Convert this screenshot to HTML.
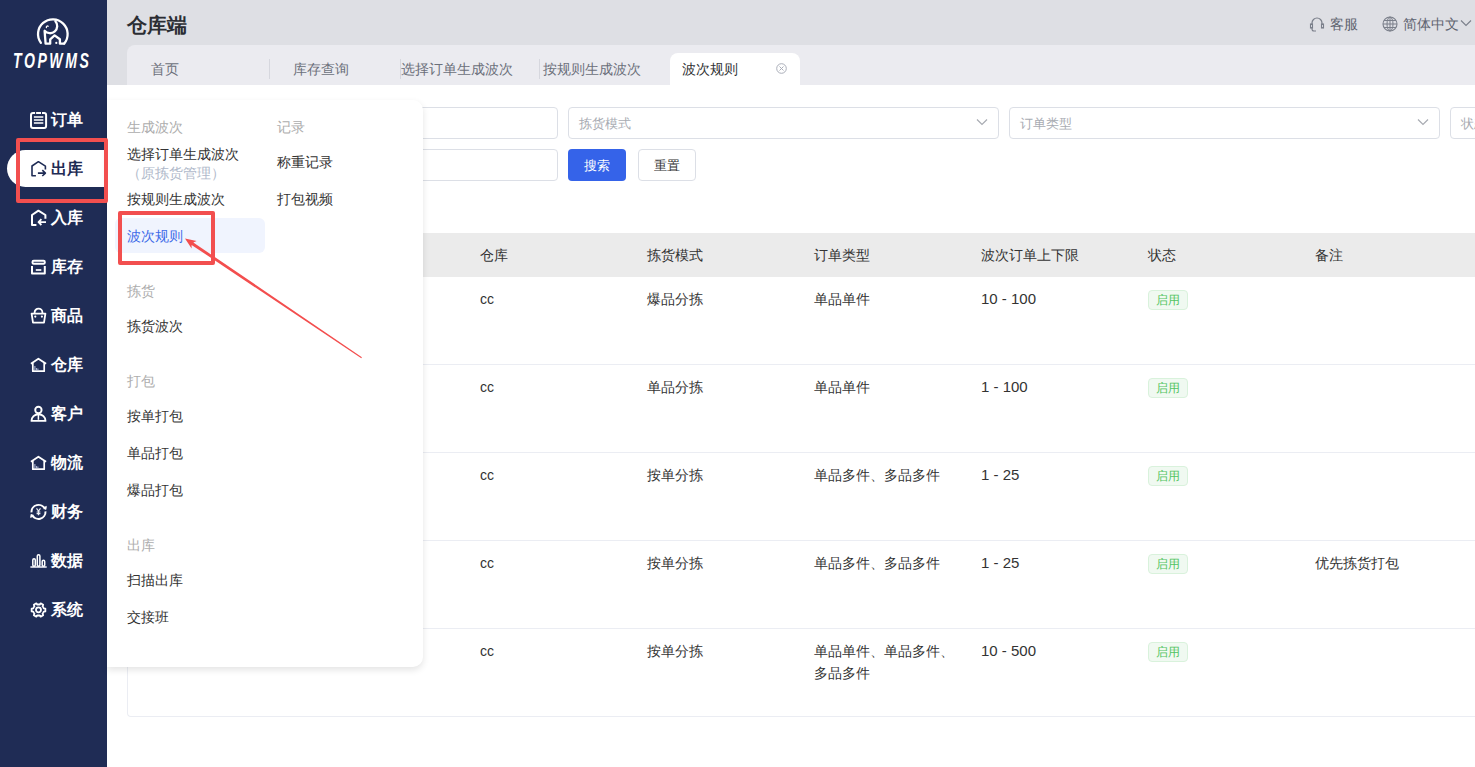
<!DOCTYPE html>
<html><head><meta charset="utf-8">
<style>
*{box-sizing:border-box;margin:0;padding:0}
html,body{width:1475px;height:767px;overflow:hidden;background:#fff;font-family:"Liberation Sans",sans-serif;color:#333}
.a{position:absolute;white-space:nowrap}
#side{position:absolute;left:0;top:0;width:107px;height:767px;background:#1f2c55}
#hdr{position:absolute;left:107px;top:0;width:1368px;height:85px;background:#dedfe4}
#tabs{position:absolute;left:127px;top:45px;width:1348px;height:40px;background:#ebebf0;border-top-left-radius:8px}
.tab{position:absolute;top:4px;height:40px;line-height:40px;font-size:14px;color:#6b707b}
.dv{position:absolute;top:14px;width:1px;height:20px;background:#d6d7de}
.nav{position:absolute;left:0;width:107px;height:24px}
.nav svg{position:absolute;left:30px;top:4px}
.nav span{position:absolute;left:51px;top:0;line-height:24px;font-size:16px;font-weight:900;color:#fff}
.inp{position:absolute;height:32px;border:1px solid #dcdfe6;border-radius:4px;background:#fff}
.ph{position:absolute;left:10px;top:1px;line-height:30px;font-size:13px;color:#a8abb2}
.chev{position:absolute;right:10px;top:10px}
.th{position:absolute;top:233px;line-height:44px;font-size:14px;color:#333}
.td{position:absolute;font-size:14px;color:#333;line-height:22px}
.tag{position:absolute;width:40px;height:20px;border:1px solid #d9f2dc;background:#f0f9f1;border-radius:4px;color:#52c461;font-size:12px;line-height:19px;text-align:center}
.rowl{position:absolute;left:127px;width:1348px;height:1px;background:#ebedf3}
#pop{position:absolute;left:107px;top:100px;width:316px;height:567px;background:#fff;border-radius:0 10px 10px 0;box-shadow:0 3px 7px rgba(0,0,0,0.11)}
.pg{position:absolute;font-size:14px;color:#adadad;line-height:20px}
.pi{position:absolute;font-size:14px;color:#333;line-height:20px}
</style></head><body>
<div id="side">
  <!-- logo -->
  <svg class="a" style="left:0;top:0" width="107" height="80" viewBox="0 0 107 80">
    <g fill="none" stroke="#fff" stroke-width="2.3" stroke-linecap="round" stroke-linejoin="round">
    <path d="M40.9 42.9 A14.8 14.8 0 1 1 64.2 43.6"/>
    <path d="M55.4 21.2 A6.3 6.3 0 1 1 44.6 30.8 L45.6 43.7 L50.2 43.7 L50.2 39.3 L54.6 35.4 L59.9 39.3 L59.9 43.7 L64.2 43.7"/>
    <path d="M46.4 27.6 A1.2 1.2 0 0 1 48.2 26.2" stroke-width="1.3"/>
    </g>
    <circle cx="56.3" cy="42.9" r="1.1" fill="#fff"/>
  </svg>
  <div class="a" style="left:13px;top:48px;font-size:22px;font-weight:bold;font-style:italic;color:#fff;transform:scaleX(0.64);transform-origin:left top;letter-spacing:4px">TOPWMS</div>

  <div class="a" style="left:7px;top:150px;width:100px;height:37px;background:#fff;border-radius:19px 0 0 19px"></div>

  <div class="nav" style="top:108px"><span>订单</span></div>
  <div class="nav" style="top:157px"><span style="color:#1f2c55">出库</span></div>
  <div class="nav" style="top:206px"><span>入库</span></div>
  <div class="nav" style="top:255px"><span>库存</span></div>
  <div class="nav" style="top:304px"><span>商品</span></div>
  <div class="nav" style="top:353px"><span>仓库</span></div>
  <div class="nav" style="top:402px"><span>客户</span></div>
  <div class="nav" style="top:451px"><span>物流</span></div>
  <div class="nav" style="top:500px"><span>财务</span></div>
  <div class="nav" style="top:549px"><span>数据</span></div>
  <div class="nav" style="top:598px"><span>系统</span></div>
<svg class="a" style="left:0;top:0" width="107" height="767" viewBox="0 0 107 767">
 <g fill="none" stroke="#fff" stroke-width="2" stroke-linecap="butt" stroke-linejoin="round">
  <!-- 订单 -->
  <path d="M35.1 113 H33 a2 2 0 0 0 -2 2 V125.9 a2 2 0 0 0 2 2 H44.1 a2 2 0 0 0 2-2 V115 a2 2 0 0 0-2-2 H42"/>
  <path d="M36.1 113 H41"/>
  <path d="M33.9 117H43.3M33.9 120H43.3M33.9 123H43.3" stroke-width="1.7"/>
  <!-- 入库 -->
  <path d="M36.4 225 H32 V215 L38.4 210.7 L45.4 215 V218.8"/>
  <path d="M46 222.1 H38.5 M41.4 219.2 L38.5 222.1 L41.4 225" stroke-width="1.8"/>
  <!-- 库存 -->
  <rect x="32.5" y="260.7" width="12.3" height="3" rx="1.2"/>
  <path d="M32 266 V273.6 H44.8 V266"/>
  <path d="M35.8 270 H41.3" stroke-width="1.7"/>
  <!-- 商品 -->
  <path d="M34.6 313 V312.5 a3.9 3.9 0 0 1 7.8 0 V313" stroke-width="1.8"/>
  <path d="M31.6 313.6 H45.4 L44 322.6 H33 Z" stroke-width="1.8"/>
  <!-- 仓库 -->
  <path d="M30.9 363.8 L38.4 358.7 L46.1 363.8" stroke-width="1.8"/>
  <path d="M32.8 363 V371.2 H44.2 V363" stroke-width="1.7"/>
  <!-- 客户 -->
  <circle cx="38.4" cy="410" r="3.2" stroke-width="1.9"/>
  <path d="M31.5 420.9 A6.9 6.6 0 0 1 45.5 420.9 Z" stroke-width="1.9"/>
  <!-- 物流 -->
  <path d="M30.9 461.8 L38.4 456.7 L46.1 461.8" stroke-width="1.8"/>
  <path d="M32.8 461 V469.2 H44.2 V461" stroke-width="1.7"/>
  <!-- 财务 -->
  <path d="M31.52 512.39 A7.0 7.0 0 0 1 44.89 509.05" stroke-width="2"/>
  <path d="M45.48 511.41 A7.0 7.0 0 0 1 32.11 514.75" stroke-width="2"/>
  <path d="M43.6 507.6 L46.4 506.4 L45.9 509.6Z" fill="#fff" stroke-width="0.8"/>
  <path d="M33.4 516.2 L30.6 517.4 L31.1 514.2Z" fill="#fff" stroke-width="0.8"/>
  <!-- 系统 -->
  <path d="M43.26 607.25 L43.76 608.39 L45.35 608.54 L45.35 611.46 L43.76 611.61 L43.26 612.75 L42.52 613.75 L43.18 615.20 L40.66 616.66 L39.74 615.36 L38.50 615.50 L37.26 615.36 L36.34 616.66 L33.82 615.20 L34.48 613.75 L33.74 612.75 L33.24 611.61 L31.65 611.46 L31.65 608.54 L33.24 608.39 L33.74 607.25 L34.48 606.25 L33.82 604.80 L36.34 603.34 L37.26 604.64 L38.50 604.50 L39.74 604.64 L40.66 603.34 L43.18 604.80 L42.52 606.25Z" stroke-width="1.8"/>
  <circle cx="38.5" cy="609.8" r="2.5" stroke-width="1.8"/>
 </g>
 <!-- 出库 navy -->
 <g fill="none" stroke="#1f2c55" stroke-width="1.6" stroke-linejoin="round">
  <path d="M35.9 175.8 H32 V166 L38.4 161.7 L45.4 166.2 V169.5"/>
  <path d="M37.9 173.1 H45.4 M42.3 170.2 L45.4 173.1 L42.3 176"/>
 </g>
 <!-- dots / fills -->
 <circle cx="35.3" cy="316.6" r="1.1" fill="#fff"/>
 <circle cx="41.9" cy="316.6" r="1.1" fill="#fff"/>
 <path d="M38.4 415 V419.8" stroke="#fff" stroke-width="1.5"/>
 <path d="M34.9 366 V370.3 M36.4 368 V370.3 M37.9 368.5 V370.3" stroke="#b9c2dd" stroke-width="1"/>
 <path d="M34.9 464 V468.3 M36.4 466 V468.3 M37.9 466.5 V468.3" stroke="#b9c2dd" stroke-width="1"/>
 <g fill="none" stroke="#e6e8f0" stroke-width="1.3">
  <path d="M36.5 508.4 L38.5 511 L40.5 508.4 M38.5 511 V515.2 M36.6 512 H40.4 M36.6 513.7 H40.4" stroke="#eceef4" stroke-width="1.2"/>
 </g>
 <path d="M30.4 567 H46.7" stroke="#dfe1ea" stroke-width="1.7"/>
 <g fill="none" stroke="#fff" stroke-width="1.5">
  <rect x="32.8" y="558.7" width="2.5" height="7.5" rx="1.2"/>
  <rect x="37.3" y="554.8" width="2.6" height="11.4" rx="1.2"/>
  <rect x="42.2" y="560.3" width="2.5" height="5.9" rx="1.2"/>
 </g>
</svg>
</div>

<div id="hdr"></div>
<div class="a" style="left:127px;top:12px;font-size:20px;font-weight:bold;color:#2b2d33;line-height:26px">仓库端</div>
<div id="tabs">
  <div class="tab" style="left:24px">首页</div>
  <div class="dv" style="left:142px"></div>
  <div class="tab" style="left:166px">库存查询</div>
  <div class="dv" style="left:273px"></div>
  <div class="tab" style="left:274px">选择订单生成波次</div>
  <div class="dv" style="left:412px"></div>
  <div class="tab" style="left:416px">按规则生成波次</div>
  <div class="a" style="left:543px;top:8px;width:130px;height:32px;background:#fff;border-radius:8px 8px 0 0"></div>
  <div class="tab" style="left:555px;top:8px;line-height:32px;color:#303133">波次规则</div>
  <svg class="a" style="left:649px;top:18px" width="11" height="11" viewBox="0 0 11 11"><circle cx="5.5" cy="5.5" r="4.8" fill="none" stroke="#a9adb8" stroke-width="1"/><path d="M3.5 3.5l4 4M7.5 3.5l-4 4" stroke="#a9adb8" stroke-width="1"/></svg>
</div>
<!-- header right -->
<svg class="a" style="left:1309px;top:16px" width="16" height="16" viewBox="0 0 16 16"><path d="M3 9V7a5 5 0 0 1 10 0v2" fill="none" stroke="#7a7f8a" stroke-width="1.2"/><rect x="1.5" y="8" width="2" height="4" fill="none" stroke="#7a7f8a" stroke-width="1.1"/><rect x="12.5" y="8" width="2" height="4" fill="none" stroke="#7a7f8a" stroke-width="1.1"/><path d="M3 12v1a2 2 0 0 0 2 2h2" fill="none" stroke="#7a7f8a" stroke-width="1.1"/></svg>
<div class="a" style="left:1330px;top:14px;font-size:14px;line-height:20px;color:#5f6470">客服</div>
<svg class="a" style="left:1382px;top:16px" width="16" height="16" viewBox="0 0 16 16"><circle cx="8" cy="8" r="7" fill="none" stroke="#7a7f8a" stroke-width="1.1"/><ellipse cx="8" cy="8" rx="3" ry="7" fill="none" stroke="#7a7f8a" stroke-width="1"/><path d="M1 8h14M2 4.5h12M2 11.5h12M8 1v14" stroke="#7a7f8a" stroke-width="1"/></svg>
<div class="a" style="left:1403px;top:14px;font-size:14px;line-height:20px;color:#5f6470">简体中文</div>
<svg class="a" style="left:1460px;top:19px" width="12" height="8" viewBox="0 0 12 8"><path d="M1 1.5l5 5 5-5" fill="none" stroke="#7a7f8a" stroke-width="1.1"/></svg>

<!-- form -->
<div class="inp" style="left:127px;top:107px;width:431px"></div>
<div class="inp" style="left:568px;top:107px;width:431px"><span class="ph">拣货模式</span><svg class="chev" width="12" height="8" viewBox="0 0 12 8"><path d="M1 1.5l5 5 5-5" fill="none" stroke="#a8abb2" stroke-width="1.2"/></svg></div>
<div class="inp" style="left:1009px;top:107px;width:431px"><span class="ph">订单类型</span><svg class="chev" width="12" height="8" viewBox="0 0 12 8"><path d="M1 1.5l5 5 5-5" fill="none" stroke="#a8abb2" stroke-width="1.2"/></svg></div>
<div class="inp" style="left:1450px;top:107px;width:431px"><span class="ph">状态</span></div>
<div class="inp" style="left:127px;top:149px;width:431px"></div>
<div class="a" style="left:568px;top:149px;width:58px;height:32px;background:#3563e9;border-radius:4px;color:#fff;font-size:13px;line-height:34px;text-align:center">搜索</div>
<div class="a" style="left:638px;top:149px;width:58px;height:32px;background:#fff;border:1px solid #dcdfe6;border-radius:4px;color:#333;font-size:13px;line-height:32px;text-align:center">重置</div>

<!-- table -->
<div class="a" style="left:127px;top:233px;width:1348px;height:484px;border-left:1px solid #ebedf3;border-bottom:1px solid #ebedf3;border-bottom-left-radius:4px"></div>
<div class="a" style="left:127px;top:233px;width:1348px;height:44px;background:#ebebeb"></div>
<div class="th" style="left:480px">仓库</div>
<div class="th" style="left:647px">拣货模式</div>
<div class="th" style="left:814px">订单类型</div>
<div class="th" style="left:981px">波次订单上下限</div>
<div class="th" style="left:1148px">状态</div>
<div class="th" style="left:1315px">备注</div>
<div class="rowl" style="top:364px"></div>
<div class="rowl" style="top:452px"></div>
<div class="rowl" style="top:540px"></div>
<div class="rowl" style="top:628px"></div>

<div class="td" style="left:480px;top:288px">cc</div><div class="td" style="left:647px;top:288px">爆品分拣</div><div class="td" style="left:814px;top:288px">单品单件</div><div class="td" style="left:981px;top:288px;font-size:15px">10 - 100</div><div class="tag" style="left:1148px;top:290px">启用</div>
<div class="td" style="left:480px;top:376px">cc</div><div class="td" style="left:647px;top:376px">单品分拣</div><div class="td" style="left:814px;top:376px">单品单件</div><div class="td" style="left:981px;top:376px;font-size:15px">1 - 100</div><div class="tag" style="left:1148px;top:378px">启用</div>
<div class="td" style="left:480px;top:464px">cc</div><div class="td" style="left:647px;top:464px">按单分拣</div><div class="td" style="left:814px;top:464px">单品多件、多品多件</div><div class="td" style="left:981px;top:464px;font-size:15px">1 - 25</div><div class="tag" style="left:1148px;top:466px">启用</div>
<div class="td" style="left:480px;top:552px">cc</div><div class="td" style="left:647px;top:552px">按单分拣</div><div class="td" style="left:814px;top:552px">单品多件、多品多件</div><div class="td" style="left:981px;top:552px;font-size:15px">1 - 25</div><div class="tag" style="left:1148px;top:554px">启用</div><div class="td" style="left:1315px;top:552px">优先拣货打包</div>
<div class="td" style="left:480px;top:640px">cc</div><div class="td" style="left:647px;top:640px">按单分拣</div><div class="td" style="left:814px;top:640px">单品单件、单品多件、<br>多品多件</div><div class="td" style="left:981px;top:640px;font-size:15px">10 - 500</div><div class="tag" style="left:1148px;top:642px">启用</div>

<!-- popup -->
<div id="pop">
  <div class="pg" style="left:20px;top:17px">生成波次</div>
  <div class="pi" style="left:20px;top:44px">选择订单生成波次</div>
  <div class="a" style="left:20px;top:63px;font-size:14px;color:#b0b9ca;line-height:20px">（原拣货管理）</div>
  <div class="pi" style="left:20px;top:89px">按规则生成波次</div>
  <div class="a" style="left:8px;top:118px;width:150px;height:35px;background:#f0f4fe;border-radius:6px"></div>
  <div class="pi" style="left:20px;top:126px;color:#3d6ae8">波次规则</div>
  <div class="pg" style="left:20px;top:181px">拣货</div>
  <div class="pi" style="left:20px;top:216px">拣货波次</div>
  <div class="pg" style="left:20px;top:271px">打包</div>
  <div class="pi" style="left:20px;top:306px">按单打包</div>
  <div class="pi" style="left:20px;top:343px">单品打包</div>
  <div class="pi" style="left:20px;top:380px">爆品打包</div>
  <div class="pg" style="left:20px;top:435px">出库</div>
  <div class="pi" style="left:20px;top:470px">扫描出库</div>
  <div class="pi" style="left:20px;top:507px">交接班</div>
  <div class="pg" style="left:170px;top:17px">记录</div>
  <div class="pi" style="left:170px;top:52px">称重记录</div>
  <div class="pi" style="left:170px;top:89px">打包视频</div>
</div>

<!-- annotations -->
<div class="a" style="left:16px;top:138px;width:92px;height:65px;border:4px solid #f24f4f;border-radius:2px"></div>
<div class="a" style="left:118px;top:211px;width:97px;height:54px;border:4px solid #f24f4f;border-radius:2px"></div>
<svg class="a" style="left:0;top:0" width="1475" height="767" viewBox="0 0 1475 767">
  <polygon points="185,238.6 196.6,241 193.3,242.4 361.9,357.2 361.3,358.2 191.6,244.9 191.6,248.5" fill="#f34e4e"/>
</svg>
</body></html>
